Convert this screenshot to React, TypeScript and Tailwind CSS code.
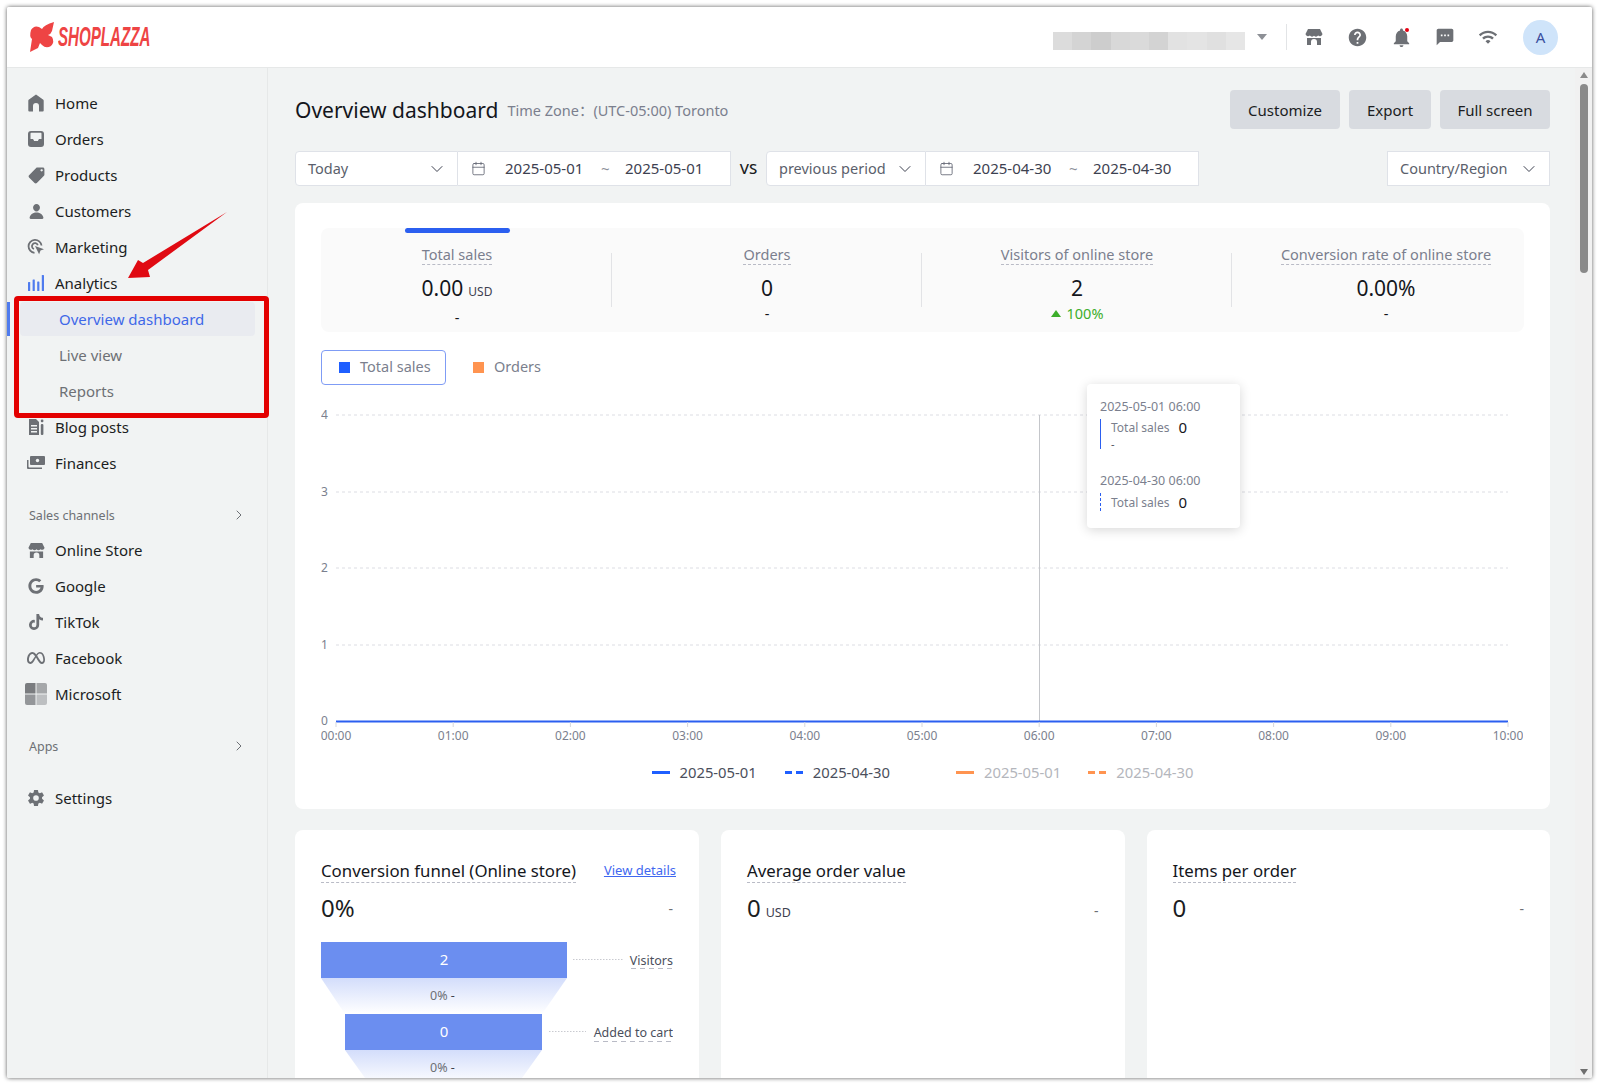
import { Calendar, ChevronDown, ChevronRight } from "lucide-react";
import type { ReactNode } from "react";
import { FaGoogle, FaTiktok } from "react-icons/fa";
import { FaMeta } from "react-icons/fa6";
import { IoPerson, IoSettingsSharp } from "react-icons/io5";
import { MdHelp, MdLocalOffer, MdNotifications, MdSms, MdWifi } from "react-icons/md";

const ICON = "#6d7075";

function StoreIcon({ size = 18 }: { size?: number }) {
  return (
    <svg width={size} height={size} viewBox="0 0 18 18" fill={ICON}>
      <path d="M3 1h12l2.500 5a2.600 2.600 0 0 1-4.300 1.600A3 3 0 0 1 9 7.700a3 3 0 0 1-4.200-.1A2.600 2.600 0 0 1 .5 6z" />
      <path d="M2 10h14v7h-4v-3a3 3 0 0 0-6 0v3H2z" />
    </svg>
  );
}

const HomeIcon = (
  <svg width="16" height="18" viewBox="0 0 16 18" fill={ICON}>
    <path d="M8 .5 15 5.500a1.500 1.500 0 0 1 .7 1.300V16.500a1 1 0 0 1-1 1H11V12a3 3 0 0 0-6 0v5.500H1.300a1 1 0 0 1-1-1V6.800A1.500 1.500 0 0 1 1 5.500z" />
  </svg>
);
const OrdersIcon = (
  <svg width="16" height="16" viewBox="0 0 16 16">
    <rect width="16" height="16" rx="3" fill={ICON} />
    <path d="M3.500 1.800h9A1 1 0 0 1 13.500 3v5H11L9.800 10H6.200L5 8H2.500V3a1 1 0 0 1 1-1.200z" fill="#f1f3f3" />
  </svg>
);
const MarketingIcon = (
  <svg width="18" height="18" viewBox="0 0 18 18" fill="none" stroke={ICON} strokeWidth="1.800">
    <path d="M7.500 14.800A6.500 6.500 0 1 1 14.500 7.500" />
    <path d="M7 11a3 3 0 1 1 3.800-3.800" />
    <path d="M8 8l9 3.200-3.500 1.400-1.400 3.700z" fill={ICON} stroke="none" />
  </svg>
);
const AnalyticsIcon = (
  <svg width="16" height="16" viewBox="0 0 16 16" fill="#4f7bee">
    <rect x="0" y="7" width="2.200" height="9" rx=".5" />
    <rect x="4.600" y="4.500" width="2.200" height="11.500" rx=".5" />
    <rect x="9.200" y="6.500" width="2.200" height="9.500" rx=".5" />
    <rect x="13.800" y="0" width="2.200" height="16" rx=".5" />
  </svg>
);
const BlogIcon = (
  <svg width="16" height="16" viewBox="0 0 16 16" fill={ICON}>
    <path d="M1 0h7l3 3v13H1z" />
    <path d="M3 6h6v1.500H3zM3 9h6v1.500H3zM3 12h6v1.500H3z" fill="#f1f3f3" />
    <rect x="12.800" y="5" width="2.600" height="11" rx="1" />
    <rect x="12.800" y="0.500" width="2.600" height="2.800" rx="1" />
  </svg>
);
const FinancesIcon = (
  <svg width="18" height="14" viewBox="0 0 18 14" fill={ICON}>
    <path d="M4 0h13a1 1 0 0 1 1 1v7a1 1 0 0 1-1 1H4a1 1 0 0 1-1-1V1a1 1 0 0 1 1-1z" />
    <circle cx="10.500" cy="4.500" r="1.700" fill="#f1f3f3" />
    <path d="M0 4h1.500v6.500a1 1 0 0 0 1 1H15V13H1a1 1 0 0 1-1-1z" />
  </svg>
);
const MicrosoftIcon = (
  <svg width="22" height="22" viewBox="0 0 22 22" className="shrink-0">
    <path d="M2 0h8.500v10.500H0V2a2 2 0 0 1 2-2z" fill="#7a7c7f" />
    <path d="M11.500 0H20a2 2 0 0 1 2 2v8.500H11.500z" fill="#a5a7a9" />
    <path d="M0 11.500h10.500V22H2a2 2 0 0 1-2-2z" fill="#949699" />
    <path d="M11.500 11.500H22V20a2 2 0 0 1-2 2h-8.500z" fill="#bdbfc1" />
  </svg>
);

function NavRow({ icon, label }: { icon: ReactNode; label: string }) {
  return (
    <div className="flex h-[36px] items-center text-[15px] text-[#1b1d22]">
      <span className="flex w-[48px] shrink-0 items-center justify-center pl-[20px] pr-[10px]">{icon}</span>
      <span>{label}</span>
    </div>
  );
}

function Sidebar() {
  return (
    <aside className="w-[261px] shrink-0 border-r border-[#e6e8e8] bg-[#f1f3f3] pt-[17px]">
      <NavRow icon={HomeIcon} label="Home" />
      <NavRow icon={OrdersIcon} label="Orders" />
      <NavRow icon={<MdLocalOffer size={19} color={ICON} className="shrink-0 -scale-x-100" />} label="Products" />
      <NavRow icon={<IoPerson size={17} color={ICON} />} label="Customers" />
      <NavRow icon={MarketingIcon} label="Marketing" />
      <NavRow icon={AnalyticsIcon} label="Analytics" />
      <div className="mt-[1px] flex h-[35px] items-start">
        <span className="h-[34px] w-[3px] bg-[#4f7bee]" />
        <span className="ml-[10px] flex h-[34px] w-[235px] items-center rounded-sm bg-[#e9ebf0] pl-[39px] text-[15px] text-[#3f68e8]">
          Overview dashboard
        </span>
      </div>
      <div className="flex h-[36px] items-center pl-[52px] text-[15px] text-[#6d7075]">Live view</div>
      <div className="flex h-[36px] items-center pl-[52px] text-[15px] text-[#6d7075]">Reports</div>
      <NavRow icon={BlogIcon} label="Blog posts" />
      <NavRow icon={FinancesIcon} label="Finances" />
      <div className="flex h-[51px] items-start justify-between pl-[22px] pr-[20px] pt-[26px] text-[12.500px] leading-[18px] text-[#6d7075]">
        <span>Sales channels</span>
        <ChevronRight size={16} strokeWidth={1.500} />
      </div>
      <NavRow icon={<StoreIcon size={17} />} label="Online Store" />
      <NavRow icon={<FaGoogle size={16} color={ICON} />} label="Google" />
      <NavRow icon={<FaTiktok size={16} color={ICON} />} label="TikTok" />
      <NavRow icon={<FaMeta size={18} color={ICON} />} label="Facebook" />
      <NavRow icon={MicrosoftIcon} label="Microsoft" />
      <div className="flex h-[68px] items-start justify-between pl-[22px] pr-[20px] pt-[26px] text-[12.500px] leading-[18px] text-[#6d7075]">
        <span>Apps</span>
        <ChevronRight size={16} strokeWidth={1.500} />
      </div>
      <NavRow icon={<IoSettingsSharp size={18} color={ICON} />} label="Settings" />
    </aside>
  );
}

const BLUR = ["#dcdcdc", "#d4d4d4", "#cdcdcd", "#d8d8d8", "#dadada", "#d3d3d3", "#e2e2e2", "#e4e4e4", "#e0e0e0", "#e6e6e6"];

function Header() {
  return (
    <header className="flex h-[61px] shrink-0 items-center border-b border-[#e6e8e8] bg-white">
      <div className="ml-[22px] flex items-center gap-[3px]">
        <svg width="26" height="30" viewBox="0 0 26 30" fill="#ee4444">
          <path d="M25 0 23 9Q22 12 19 13L23 15Q26 20 22 24 17 27 13 23L11 21 9 26 1 30 3 17Q0 15 2 8 5 3 10 5L13 7Q15 3 25 0Z" />
        </svg>
        <span className="inline-block w-[93px] origin-left scale-x-[.54] whitespace-nowrap font-['Liberation_Sans',sans-serif] text-[28px] font-bold italic leading-none text-[#ee4444]">
          SHOPLAZZA
        </span>
      </div>
      <div className="ml-auto flex items-center">
        <div className="mt-[7px] flex h-[18px] w-[192px] overflow-hidden">
          {BLUR.map((c, i) => (
            <span key={i} className="h-full flex-1" style={{ background: c }} />
          ))}
        </div>
        <span className="ml-[12px] h-0 w-0 border-x-[5px] border-t-[6px] border-x-transparent border-t-[#8d9096]" />
        <span className="ml-[19px] h-[26px] w-px bg-[#e2e4e6]" />
        <span className="ml-[18px] flex w-[18px] justify-center"><StoreIcon /></span>
        <span className="ml-[25px] flex w-[18px] justify-center"><MdHelp size={21} color={ICON} className="shrink-0" /></span>
        <span className="relative ml-[26px] flex w-[18px] justify-center">
          <MdNotifications size={23} color={ICON} className="shrink-0" />
          <span className="absolute right-[1px] top-[2px] h-[4px] w-[4px] rounded-full bg-[#e60012]" />
        </span>
        <span className="ml-[26px] flex w-[18px] justify-center"><MdSms size={20} color={ICON} className="shrink-0" /></span>
        <span className="ml-[25px] flex w-[18px] justify-center"><MdWifi size={20} color={ICON} className="shrink-0" /></span>
        <span className="ml-[26px] flex h-[35px] w-[35px] items-center justify-center rounded-full bg-[#cfe4fa] text-[15px] text-[#3b4fa0]">
          A
        </span>
        <span className="w-[34px]" />
      </div>
    </header>
  );
}

function SelectBox({ label, className }: { label: string; className: string }) {
  return (
    <div className={`flex h-[35px] items-center justify-between border border-[#dfe2e8] bg-white pl-[12px] pr-[10px] text-[14.500px] text-[#5b5f6c] ${className}`}>
      <span>{label}</span>
      <ChevronDown size={20} strokeWidth={1.200} className="text-[#3d4150]" />
    </div>
  );
}

function DateBox({ from, to, className }: { from: string; to: string; className: string }) {
  return (
    <div className={`flex h-[35px] items-center border-y border-r border-[#dfe2e8] bg-white pl-[13px] text-[15px] text-[#3d4150] ${className}`}>
      <Calendar size={15} strokeWidth={1.300} className="text-[#5b5f6c]" />
      <span className="ml-[19px] w-[96px]">{from}</span>
      <span className="w-[24px] text-[#8d909a]">~</span>
      <span>{to}</span>
    </div>
  );
}

function Stat({ label, value, unit, sub, up, divider, className }: { label: string; value: string; unit?: string; sub: string; up?: boolean; divider?: boolean; className: string }) {
  return (
    <div className={`relative flex flex-col items-center pt-[16px] ${className}`}>
      {divider ? <span className="absolute right-0 top-[25px] h-[54px] w-px bg-[#e2e3e6]" /> : null}
      <span className="border-b border-dashed border-[#b9bbc6] text-[14.500px] leading-[20px] text-[#7b7f8e]">{label}</span>
      <span className="mt-[9px] text-[21px] leading-[28px] text-[#14161c]">
        {value}
        {unit ? <span className="ml-[5px] text-[12px] text-[#3d4150]">{unit}</span> : null}
      </span>
      {up ? (
        <span className="mt-[1px] flex items-center gap-[6px] text-[14.500px] leading-[20px] text-[#3cae2b]">
          <span className="h-0 w-0 border-x-[5px] border-b-[7px] border-x-transparent border-b-[#3cae2b]" />
          {sub}
        </span>
      ) : (
        <span className="mt-[1px] text-[14.500px] leading-[20px] text-[#14161c]">{sub}</span>
      )}
    </div>
  );
}

const TICKS = ["00:00", "01:00", "02:00", "03:00", "04:00", "05:00", "06:00", "07:00", "08:00", "09:00", "10:00"];
const GRID = [
  { y: 415, l: "4" },
  { y: 492, l: "3" },
  { y: 568, l: "2" },
  { y: 645, l: "1" },
];

function Chart() {
  return (
    <svg width="1202" height="350" viewBox="321 400 1202 350" className="block">
      {GRID.map((g) => (
        <g key={g.l}>
          <line x1="336" x2="1508" y1={g.y} y2={g.y} stroke="#dcdde3" strokeDasharray="3 3" />
          <text x="321" y={g.y + 4} fontSize="12" fill="#7b7f8e">{g.l}</text>
        </g>
      ))}
      <text x="321" y="725" fontSize="12" fill="#7b7f8e">0</text>
      <line x1="1039.500" x2="1039.500" y1="415" y2="721" stroke="#c4c6ca" />
      <line x1="336" x2="1508" y1="721.500" y2="721.500" stroke="#2b5ff0" strokeWidth="2" />
      {TICKS.map((t, i) => (
        <g key={t}>
          <line x1={336 + i * 117.2} x2={336 + i * 117.2} y1="722" y2="727" stroke="#d5d7dc" />
          <text x={336 + i * 117.2} y="740" fontSize="12" textAnchor="middle" fill="#7b7f8e">{t}</text>
        </g>
      ))}
    </svg>
  );
}

function Legend() {
  const items = [
    { c: "#1f5fff", t: "#4b4f5c", d: false, x: "ml-[0px]" },
    { c: "#1f5fff", t: "#4b4f5c", d: true, x: "ml-[28px]" },
    { c: "#ff9450", t: "#b4b6bc", d: false, x: "ml-[66px]" },
    { c: "#ff9450", t: "#b4b6bc", d: true, x: "ml-[27px]" },
  ];
  return (
    <div className="flex justify-center pt-[12px]">
      {items.map((it, i) => (
        <span key={i} className={`flex items-center gap-[10px] text-[14.800px] leading-[20px] ${it.x}`} style={{ color: it.t }}>
          <svg width="18" height="3">
            <line x1="0" x2="18" y1="1.500" y2="1.500" stroke={it.c} strokeWidth="3" strokeDasharray={it.d ? "7 4" : undefined} />
          </svg>
          {i % 2 === 0 ? "2025-05-01" : "2025-04-30"}
        </span>
      ))}
    </div>
  );
}

function ChartTooltip() {
  return (
    <div className="absolute left-[766px] top-[-16px] h-[144px] w-[153px] rounded-sm bg-white pl-[13px] pt-[15px] shadow-[0_2px_12px_rgba(0,0,0,0.16)]">
      <div className="text-[12.500px] leading-[16px] text-[#7b7f8e]">2025-05-01 06:00</div>
      <div className="mt-[4px] flex h-[30px] border-l border-[#2b5ff0] pl-[10px]">
        <span className="text-[12px] leading-[18px] text-[#7b7f8e]">Total sales</span>
        <span className="ml-[9px] text-[15px] leading-[16px] text-[#14161c]">0</span>
      </div>
      <div className="ml-[11px] mt-[-10px] text-[11px] leading-[10px] text-[#4b4f5c]">-</div>
      <div className="mt-[24px] text-[12.500px] leading-[16px] text-[#7b7f8e]">2025-04-30 06:00</div>
      <div className="mt-[4px] flex h-[18px] border-l border-dashed border-[#2b5ff0] pl-[10px]">
        <span className="text-[12px] leading-[20px] text-[#7b7f8e]">Total sales</span>
        <span className="ml-[9px] text-[15px] leading-[18px] text-[#14161c]">0</span>
      </div>
    </div>
  );
}

function Funnel() {
  return (
    <svg width="352" height="136" viewBox="321 942 352 136" className="mt-[19px] block">
      <defs>
        <linearGradient id="fade" x1="0" x2="0" y1="0" y2="1">
          <stop offset="0" stopColor="#d3ddfb" />
          <stop offset="1" stopColor="#ffffff" />
        </linearGradient>
      </defs>
      <rect x="321" y="942" width="246" height="36" fill="#6b8ef0" />
      <polygon points="321,978 567,978 542,1014 345,1014" fill="url(#fade)" />
      <rect x="345" y="1014" width="197" height="36" fill="#6b8ef0" />
      <polygon points="345,1050 542,1050 517,1085 370,1085" fill="url(#fade)" />
      <text x="444" y="965" fontSize="15" textAnchor="middle" fill="#fff">2</text>
      <text x="444" y="1037" fontSize="15" textAnchor="middle" fill="#fff">0</text>
      <text x="430" y="1000" fontSize="12.500" fill="#6d7075">0% <tspan fill="#3d4150">-</tspan></text>
      <text x="430" y="1072" fontSize="12.500" fill="#6d7075">0% <tspan fill="#3d4150">-</tspan></text>
      <line x1="573" x2="623" y1="959.500" y2="959.500" stroke="#c9cad0" strokeDasharray="1.500 1.500" />
      <line x1="549" x2="586" y1="1031.500" y2="1031.500" stroke="#c9cad0" strokeDasharray="1.500 1.500" />
      <text x="673" y="965" fontSize="12.500" textAnchor="end" fill="#4b4f5c">Visitors</text>
      <text x="673" y="1037" fontSize="12.500" textAnchor="end" fill="#4b4f5c">Added to cart</text>
      <line x1="631" x2="673" y1="968.500" y2="968.500" stroke="#b9bbc6" strokeDasharray="5 4" />
      <line x1="594" x2="673" y1="1041.500" y2="1041.500" stroke="#b9bbc6" strokeDasharray="5 4" />
    </svg>
  );
}

function SmallCard({ title, value, unit, link, children }: { title: string; value: string; unit?: string; link?: boolean; children?: ReactNode }) {
  return (
    <section className="h-[260px] flex-1 rounded-t-lg bg-white pl-[26px] pr-[26px] pt-[30px]">
      <div className="flex items-start justify-between">
        <span className="border-b border-dashed border-[#b9bbc6] text-[16.800px] leading-[22px] text-[#14161c]">{title}</span>
        {link ? <span className="-mr-[3px] pt-[1px] text-[13px] leading-[18px] text-[#3f68f0] underline">View details</span> : null}
      </div>
      <div className="mt-[10px] flex items-center justify-between">
        <span className="text-[24px] leading-[30px] text-[#1b1d22]">
          {value}
          {unit ? <span className="ml-[5px] text-[12.500px] text-[#3d4150]">{unit}</span> : null}
        </span>
        <span className="text-[14px] text-[#6d7075]">-</span>
      </div>
      {children}
    </section>
  );
}

function Main() {
  return (
    <main className="min-w-0 flex-1 overflow-hidden bg-[#f1f3f3] pl-[27px] pr-[25px] pt-[22px]">
      <div className="flex h-[39px] items-center">
        <h1 className="pt-[2px] text-[21px] font-normal text-[#14161c]">Overview dashboard</h1>
        <span className="ml-[9px] pt-[2px] text-[14.500px] text-[#7b7f8e]">Time Zone：(UTC-05:00) Toronto</span>
        <div className="ml-auto flex gap-[9px] text-[15px] text-[#1b1d22]">
          <button className="h-[39px] w-[110px] rounded-sm bg-[#d8dbe0] pt-[1px]">Customize</button>
          <button className="h-[39px] w-[82px] rounded-sm bg-[#d8dbe0] pt-[1px]">Export</button>
          <button className="h-[39px] w-[110px] rounded-sm bg-[#d8dbe0] pt-[1px]">Full screen</button>
        </div>
      </div>

      <div className="mt-[22px] flex items-center">
        <SelectBox label="Today" className="w-[163px] rounded-l-sm" />
        <DateBox from="2025-05-01" to="2025-05-01" className="w-[273px]" />
        <span className="w-[35px] text-center text-[15px] font-medium text-[#1b1d22]">VS</span>
        <SelectBox label="previous period" className="w-[160px] rounded-l-sm" />
        <DateBox from="2025-04-30" to="2025-04-30" className="w-[273px]" />
        <SelectBox label="Country/Region" className="ml-auto w-[163px]" />
      </div>

      <section className="mt-[17px] h-[606px] rounded-lg bg-white px-[26px] pt-[25px]">
        <div className="relative flex h-[104px] rounded-lg bg-[#fafafa]">
          <span className="absolute left-[84px] top-0 h-[5px] w-[105px] rounded-sm bg-[#2b5ff0]" />
          <Stat label="Total sales" value="0.00" unit="USD" sub="-" divider className="w-[291px] pr-[19px]" />
          <Stat label="Orders" value="0" sub="-" divider className="w-[310px]" />
          <Stat label="Visitors of online store" value="2" sub="100%" up divider className="w-[310px]" />
          <Stat label="Conversion rate of online store" value="0.00%" sub="-" className="w-[291px] pl-[17px]" />
        </div>

        <div className="mt-[17px] flex h-[35px] items-center pt-[1px] text-[14.500px] text-[#7b7f8e]">
          <span className="flex h-[35px] w-[125px] items-center gap-[10px] rounded-sm border border-[#7f9cf5] pl-[17px]">
            <span className="h-[11px] w-[11px] bg-[#1f5fff]" />
            Total sales
          </span>
          <span className="ml-[27px] flex items-center gap-[10px]">
            <span className="h-[11px] w-[11px] bg-[#ff9450]" />
            Orders
          </span>
        </div>

        <div className="relative mt-[16px]">
          <Chart />
          <ChartTooltip />
        </div>
        <Legend />
      </section>

      <div className="mt-[21px] flex gap-[22px]">
        <SmallCard title="Conversion funnel (Online store)" value="0%" link>
          <Funnel />
        </SmallCard>
        <SmallCard title="Average order value" value="0" unit="USD" />
        <SmallCard title="Items per order" value="0" />
      </div>
    </main>
  );
}

function Scrollbar() {
  return (
    <div className="flex w-[17px] shrink-0 flex-col items-center bg-[#f1f1f1] pt-[4px]">
      <span className="h-0 w-0 border-x-[4px] border-b-[6px] border-x-transparent border-b-[#8a8a8a]" />
      <span className="mt-[6px] h-[189px] w-[8px] rounded-full bg-[#8a8a8a]" />
      <span className="mt-auto mb-[3px] h-0 w-0 border-x-[4px] border-t-[6px] border-x-transparent border-t-[#6f6f6f]" />
    </div>
  );
}

// the red box and arrow are annotations painted over the screenshot
function Annotations() {
  return (
    <>
      <div className="pointer-events-none absolute left-[14px] top-[296px] h-[122px] w-[255px] rounded-sm border-[5px] border-[#e30000]" />
      <svg className="pointer-events-none absolute left-[120px] top-[205px]" width="115" height="80" viewBox="120 205 115 80">
        <polygon points="227,212 143,263 138,260 128,278 150,277 148,270" fill="#e00a12" />
      </svg>
    </>
  );
}

export default function App() {
  return (
    <div className="relative h-[1085px] w-[1600px] overflow-hidden bg-white p-[7px] font-['Noto_Sans','Noto_Sans_CJK_SC',sans-serif]">
      <div className="flex h-[1071px] w-[1585px] flex-col overflow-hidden rounded-[2px] bg-white shadow-[0_0_4px_rgba(0,0,0,0.65)]">
        <Header />
        <div className="flex min-h-0 flex-1">
          <Sidebar />
          <Main />
          <Scrollbar />
        </div>
      </div>
      <Annotations />
    </div>
  );
}
